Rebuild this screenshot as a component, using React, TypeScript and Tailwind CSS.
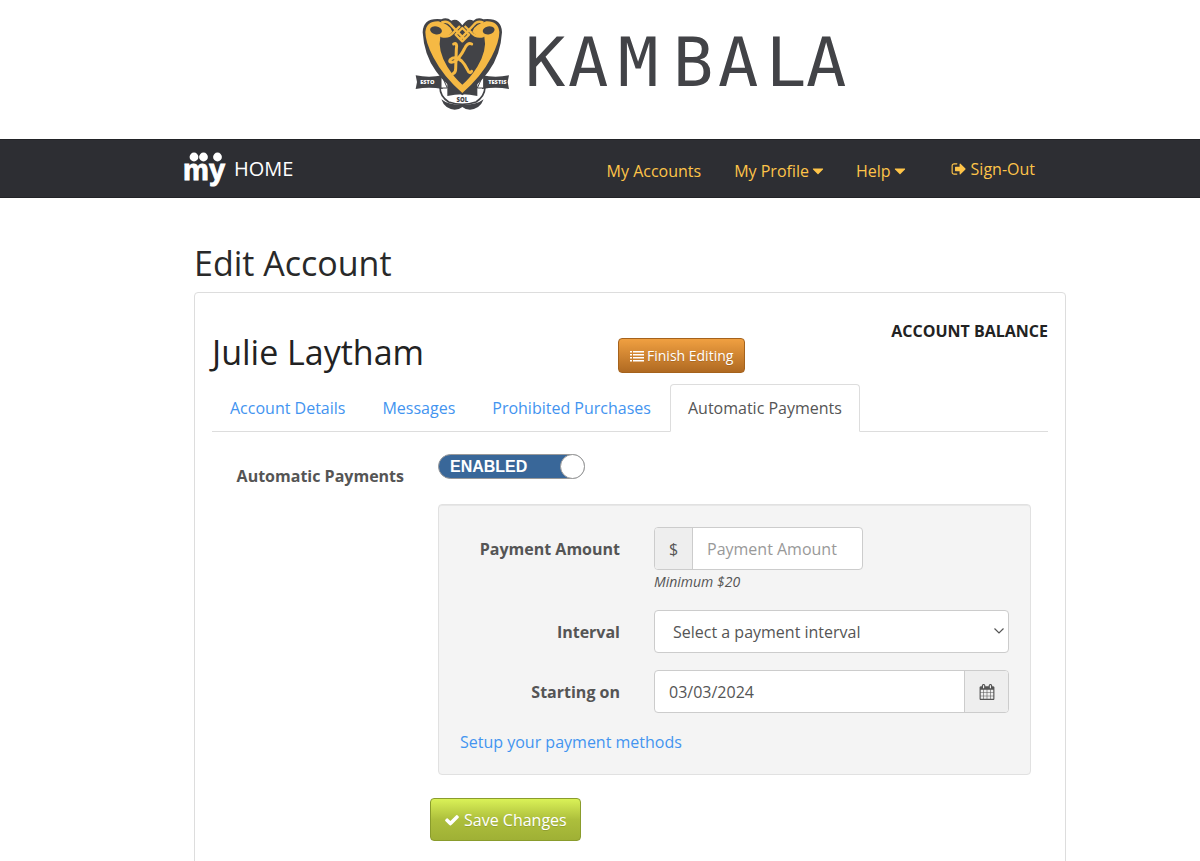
// ============================================================
// App.tsx
// Account editing page, "Automatic Payments" tab.
// ============================================================
import { useState } from 'react';
import type { ReactNode } from 'react';

const TABS = ['Account Details', 'Messages', 'Prohibited Purchases', 'Automatic Payments'];

const NAV = [
  { label: 'My Accounts', menu: false },
  { label: 'My Profile', menu: true },
  { label: 'Help', menu: true },
];

// Wordmark letters and their left edges
const WORDMARK: [string, number][] = [['K', 2], ['A', 45], ['M', 95], ['B', 150], ['A', 195], ['L', 243], ['A', 283]];

/* ---------- icons ---------- */

function Glyph({ d, className }: { d: string; className: string }) {
  return (
    <svg viewBox="0 0 1792 1792" fill="currentColor" aria-hidden="true" className={className}>
      <path d={d} />
    </svg>
  );
}

const CARET = 'M1408 704q0 26-19 45l-448 448q-19 19-45 19t-45-19l-448-448q-19-19-19-45t19-45 45-19h896q26 0 45 19t19 45z';
const CHECK = 'M1671 566q0 40-28 68l-724 724-136 136q-28 28-68 28t-68-28l-136-136-362-362q-28-28-28-68t28-68l136-136q28-28 68-28t68 28l294 295 656-657q28-28 68-28t68 28l136 136q28 28 28 68z';
const SIGN_OUT = 'M704 1440q0 4 1 20t.5 26.5-3 23.5-10 19.5-20.5 6.5h-320q-119 0-203.5-84.5t-84.5-203.5v-704q0-119 84.5-203.5t203.5-84.5h320q13 0 22.5 9.5t9.5 22.5q0 4 1 20t.5 26.5-3 23.5-10 19.5-20.5 6.5h-320q-66 0-113 47t-47 113v704q0 66 47 113t113 47h312l11.5 1 11.5 3 8 5.5 7 9 2 13.5zm928-544q0 26-19 45l-544 544q-19 19-45 19t-45-19-19-45v-288h-448q-26 0-45-19t-19-45v-384q0-26 19-45t45-19h448v-288q0-26 19-45t45-19 45 19l544 544q19 19 19 45z';
const LIST = 'M0 256h256v192h-256zM0 640h256v192h-256zM0 1024h256v192h-256zM0 1408h256v192h-256zM384 256h1408v192h-1408zM384 640h1408v192h-1408zM384 1024h1408v192h-1408zM384 1408h1408v192h-1408z';
const CALENDAR = 'M192 1664h288v-288h-288v288zm352 0h320v-288h-320v288zm-352-352h288v-320h-288v320zm352 0h320v-320h-320v320zm-352-384h288v-288h-288v288zm736 736h320v-288h-320v288zm-384-736h320v-288h-320v288zm768 736h288v-288h-288v288zm-384-352h320v-320h-320v320zm-352-864v-288q0-13-9.5-22.5t-22.5-9.5h-64q-13 0-22.5 9.5t-9.5 22.5v288q0 13 9.5 22.5t22.5 9.5h64q13 0 22.5-9.5t9.5-22.5zm736 864h288v-320h-288v320zm-384-384h320v-288h-320v288zm384 0h288v-288h-288v288zm32-480v-288q0-13-9.5-22.5t-22.5-9.5h-64q-13 0-22.5 9.5t-9.5 22.5v288q0 13 9.5 22.5t22.5 9.5h64q13 0 22.5-9.5t9.5-22.5zm384-64v1280q0 52-38 90t-90 38h-1408q-52 0-90-38t-38-90v-1280q0-52 38-90t90-38h128v-96q0-66 47-113t113-47h64q66 0 113 47t47 113v96h384v-96q0-66 47-113t113-47h64q66 0 113 47t47 113v96h128q52 0 90 38t38 90z';

/* ---------- logos ---------- */

function Crest() {
  return (
    <svg viewBox="33 24 282 279" className="h-[93px] w-[94px]" aria-hidden="true">
      {/* scroll under the shield */}
      <path d="M112 268Q122 297 152 299Q166 299 175 291Q184 299 198 299Q228 297 239 268Q216 286 175 284Q134 286 112 268Z" fill="#424347" />
      <path d="M108 232Q108 260 134 276Q175 290 216 276Q242 260 243 232" fill="#fff" stroke="#424347" strokeWidth="5" />
      <path d="M130 200H220V258Q175 248 130 258Z" fill="#424347" />
      <text x="175" y="277" textAnchor="middle" className="fill-[#424347] font-['Open_Sans',sans-serif] text-[18px] font-extrabold">SOL</text>
      {/* side ribbons */}
      <path d="M35 196Q75 204 116 196V237Q75 229 35 237L39 216Z" fill="#424347" />
      <path d="M315 196Q275 204 234 196V237Q275 229 315 237L311 216Z" fill="#424347" />
      <path d="M111 192L130 234H111ZM239 192L220 234H239Z" fill="#fff" stroke="#424347" strokeWidth="3" />
      <text x="70" y="223" textAnchor="middle" className="fill-white font-['Open_Sans',sans-serif] text-[17px] font-extrabold">ESTO</text>
      <text x="280" y="223" textAnchor="middle" className="fill-white font-['Open_Sans',sans-serif] text-[17px] font-extrabold">TESTIS</text>
      {/* shield */}
      <path d="M175 46Q160 22 142 32Q128 20 112 28Q57 22 56 67Q60 135 96 184Q124 225 175 256Q226 225 254 184Q290 135 294 67Q293 22 238 28Q222 20 208 32Q190 22 175 46Z" fill="#424347" />
      <path d="M175 249Q118 200 88 142Q64 96 64 66Q67 33 103 34Q140 44 145 65Q128 86 109 80Q100 120 130 170Q150 202 175 224Q200 202 220 170Q250 120 241 80Q222 86 205 65Q210 44 247 34Q283 33 286 66Q286 96 262 142Q232 200 175 249Z" fill="#f5b944" />
      <ellipse cx="96" cy="61" rx="18" ry="12" transform="rotate(12 96 61)" fill="#424347" />
      <ellipse cx="254" cy="61" rx="18" ry="12" transform="rotate(-12 254 61)" fill="#424347" />
      <g fill="none" stroke="#f5b944" strokeWidth="7" strokeLinejoin="round">
        <path d="M112 38Q130 30 142 46L182 88M238 38Q220 30 208 46L168 88" />
        <path d="M112 78Q134 84 148 68L168 48M238 78Q216 84 202 68L182 48" />
        <path d="M175 54L195 74L175 94L155 74Z" />
      </g>
      {/* monogram */}
      <g fill="none" stroke="#f5b944" strokeWidth="9" strokeLinecap="round">
        <path d="M149 102Q161 96 157 118L155 176Q155 188 147 191" />
        <path d="M203 102Q190 96 181 117Q168 143 151 155Q132 160 139 149Q153 136 173 153Q182 162 190 178Q197 194 203 184" />
      </g>
    </svg>
  );
}

function Wordmark() {
  return (
    <svg viewBox="0 0 322 80" className="h-20 w-[322px] overflow-visible" role="img" aria-label="KAMBALA">
      {WORDMARK.map(([letter, x], i) => (
        <text key={i} x={x} y="62" className="fill-[#424347] font-['DejaVu_Sans_Mono',monospace] text-[67px]">{letter}</text>
      ))}
    </svg>
  );
}

function MyLogo() {
  return (
    <svg viewBox="0 0 42 36" className="h-9 w-[42px] overflow-visible" fill="#fff" aria-hidden="true">
      <circle cx="10" cy="6" r="4.400" />
      <circle cx="19.500" cy="6" r="4.400" />
      <circle cx="33.500" cy="6" r="4.400" />
      <text x="-1" y="29" stroke="#fff" strokeWidth="1" className="font-['Liberation_Sans',sans-serif] text-[29px] font-bold">m</text>
      <text x="25" y="29" stroke="#fff" strokeWidth="1" className="font-['Liberation_Sans',sans-serif] text-[29px] font-bold">y</text>
    </svg>
  );
}

/* ---------- form ---------- */

function Row({ label, id, children }: { label: string; id: string; children: ReactNode }) {
  return (
    <div className="flex gap-[34px]">
      <label htmlFor={id} className="w-40 shrink-0 pt-2.5 text-right font-bold">{label}</label>
      <div className="min-w-0 flex-1">{children}</div>
    </div>
  );
}

export default function App() {
  const [tab, setTab] = useState('Automatic Payments');
  const [enabled, setEnabled] = useState(true);
  const [date, setDate] = useState('03/03/2024');

  return (
    <div className="min-h-screen bg-white font-['Open_Sans',sans-serif] text-base leading-6 text-[#555]">
      <header className="flex h-[139px] items-start justify-center gap-3.5 pt-[18px] pl-15">
        <Crest />
        <div className="pt-1.5"><Wordmark /></div>
      </header>

      <nav className="border-y border-[#222327] bg-[#2d2e33] pl-15">
        <div className="mx-auto flex h-[57px] max-w-[892px] items-center">
          <a href="#home" className="flex items-center gap-2 text-xl text-white"><MyLogo />HOME</a>
          <div className="ml-auto flex items-center gap-[33px] pt-1 text-[#fec449]">
            {NAV.map(item => (
              <a key={item.label} href="#nav" className="flex items-center">
                {item.label}
                {item.menu && <Glyph d={CARET} className="-mr-1 size-[18px]" />}
              </a>
            ))}
          </div>
          <a href="#sign-out" className="mr-[41px] ml-[46px] flex items-center gap-1 text-[#fec449]">
            <Glyph d={SIGN_OUT} className="size-4" />Sign-Out
          </a>
        </div>
      </nav>

      <main className="pl-15">
        <div className="mx-auto max-w-[872px]">
          <h1 className="pt-[42px] pb-1.5 text-[34px] leading-[46px] text-[#292929]">Edit Account</h1>

          <section className="rounded border border-[#ddd] px-[17px] pb-6">
            <div className="flex h-[91px] items-start text-[#222]">
              <h2 className="w-[406px] pt-9 text-[34px] leading-[46px]">Julie Laytham</h2>
              <button type="button" className="mt-[45px] flex h-[35px] items-center gap-[3px] rounded border border-[#a5621c] bg-linear-to-b from-[#f0a041] to-[#b06a22] px-[11px] text-sm text-white text-shadow-2xs">
                <Glyph d={LIST} className="size-3.5" />Finish Editing
              </button>
              <p className="ml-auto pt-[26px] font-bold">ACCOUNT BALANCE</p>
            </div>

            <div role="tablist" className="flex gap-px border-b border-[#ddd]">
              {TABS.map(name => (
                <button
                  key={name}
                  type="button"
                  role="tab"
                  aria-selected={tab === name}
                  onClick={() => setTab(name)}
                  className={`-mb-px h-12 rounded-t border px-[17px] ${tab === name ? 'border-[#ddd] border-b-white bg-white text-[#555]' : 'border-transparent text-[#4394f0]'}`}
                >
                  {name}
                </button>
              ))}
            </div>

            <form className="pt-[22px] pr-[17px]" onSubmit={e => e.preventDefault()}>
              <div className="flex gap-[34px]">
                <label htmlFor="auto" className="w-48 shrink-0 pt-2.5 text-right font-bold">Automatic Payments</label>
                <div className="min-w-0 flex-1">
                  {/* on/off switch */}
                  <label className={`flex h-[25px] w-[147px] cursor-pointer items-center justify-between rounded-full border border-[#999] pl-[11px] font-['Liberation_Sans',sans-serif] font-bold text-white ${enabled ? 'bg-[#396799]' : 'bg-[#999]'}`}>
                    <input id="auto" type="checkbox" className="sr-only" checked={enabled} onChange={e => setEnabled(e.target.checked)} />
                    {enabled ? 'ENABLED' : 'DISABLED'}
                    <span className="-mr-px size-[25px] rounded-full border border-[#999] bg-white" />
                  </label>

                  <div className="mt-[25px] flex flex-col gap-[17px] rounded border border-[#e1e1e1] bg-[#f4f4f4] px-[21px] pt-[22px] pb-5 inset-shadow-2xs">
                    <Row label="Payment Amount" id="amount">
                      <div className="flex h-[43px] w-[209px] overflow-hidden rounded border border-[#ccc] bg-white">
                        <span className="flex w-[38px] shrink-0 items-center justify-center border-r border-[#ccc] bg-[#eee]">$</span>
                        <input id="amount" placeholder="Payment Amount" className="w-full min-w-0 px-3.5 outline-none placeholder:text-[#999]" />
                      </div>
                      <p className="pt-px text-sm leading-[22px] italic">Minimum $20</p>
                    </Row>
                    <Row label="Interval" id="interval">
                      <div className="relative">
                        <select id="interval" className="h-[43px] w-full appearance-none rounded border border-[#ccc] bg-white px-[18px] outline-none">
                          <option>Select a payment interval</option>
                          <option>Weekly</option>
                          <option>Monthly</option>
                        </select>
                        <svg viewBox="0 0 12 8" className="pointer-events-none absolute top-[17px] right-1 h-2 w-3" fill="none" stroke="#555" strokeWidth="1.200" aria-hidden="true">
                          <path d="M1.500 1.500L6 6L10.500 1.500" />
                        </svg>
                      </div>
                    </Row>
                    <Row label="Starting on" id="start">
                      <div className="flex h-[43px] overflow-hidden rounded border border-[#ccc] bg-white">
                        <input id="start" value={date} onChange={e => setDate(e.target.value)} className="w-full min-w-0 px-3.5 outline-none" />
                        <button type="button" aria-label="Pick a date" className="flex w-11 shrink-0 items-center justify-center border-l border-[#ccc] bg-[#eee]">
                          <Glyph d={CALENDAR} className="size-4" />
                        </button>
                      </div>
                    </Row>
                    <a href="#methods" className="self-start text-[#4394f0]">Setup your payment methods</a>
                  </div>

                  <button type="submit" className="mt-[23px] -ml-2 flex h-[43px] items-center gap-1 rounded border border-[#8a9c2c] bg-linear-to-b from-[#daf157] via-[#adbf3c] to-[#9fb035] px-[13px] text-white text-shadow-2xs">
                    <Glyph d={CHECK} className="size-4" />Save Changes
                  </button>
                </div>
              </div>
            </form>
          </section>
        </div>
      </main>
    </div>
  );
}
